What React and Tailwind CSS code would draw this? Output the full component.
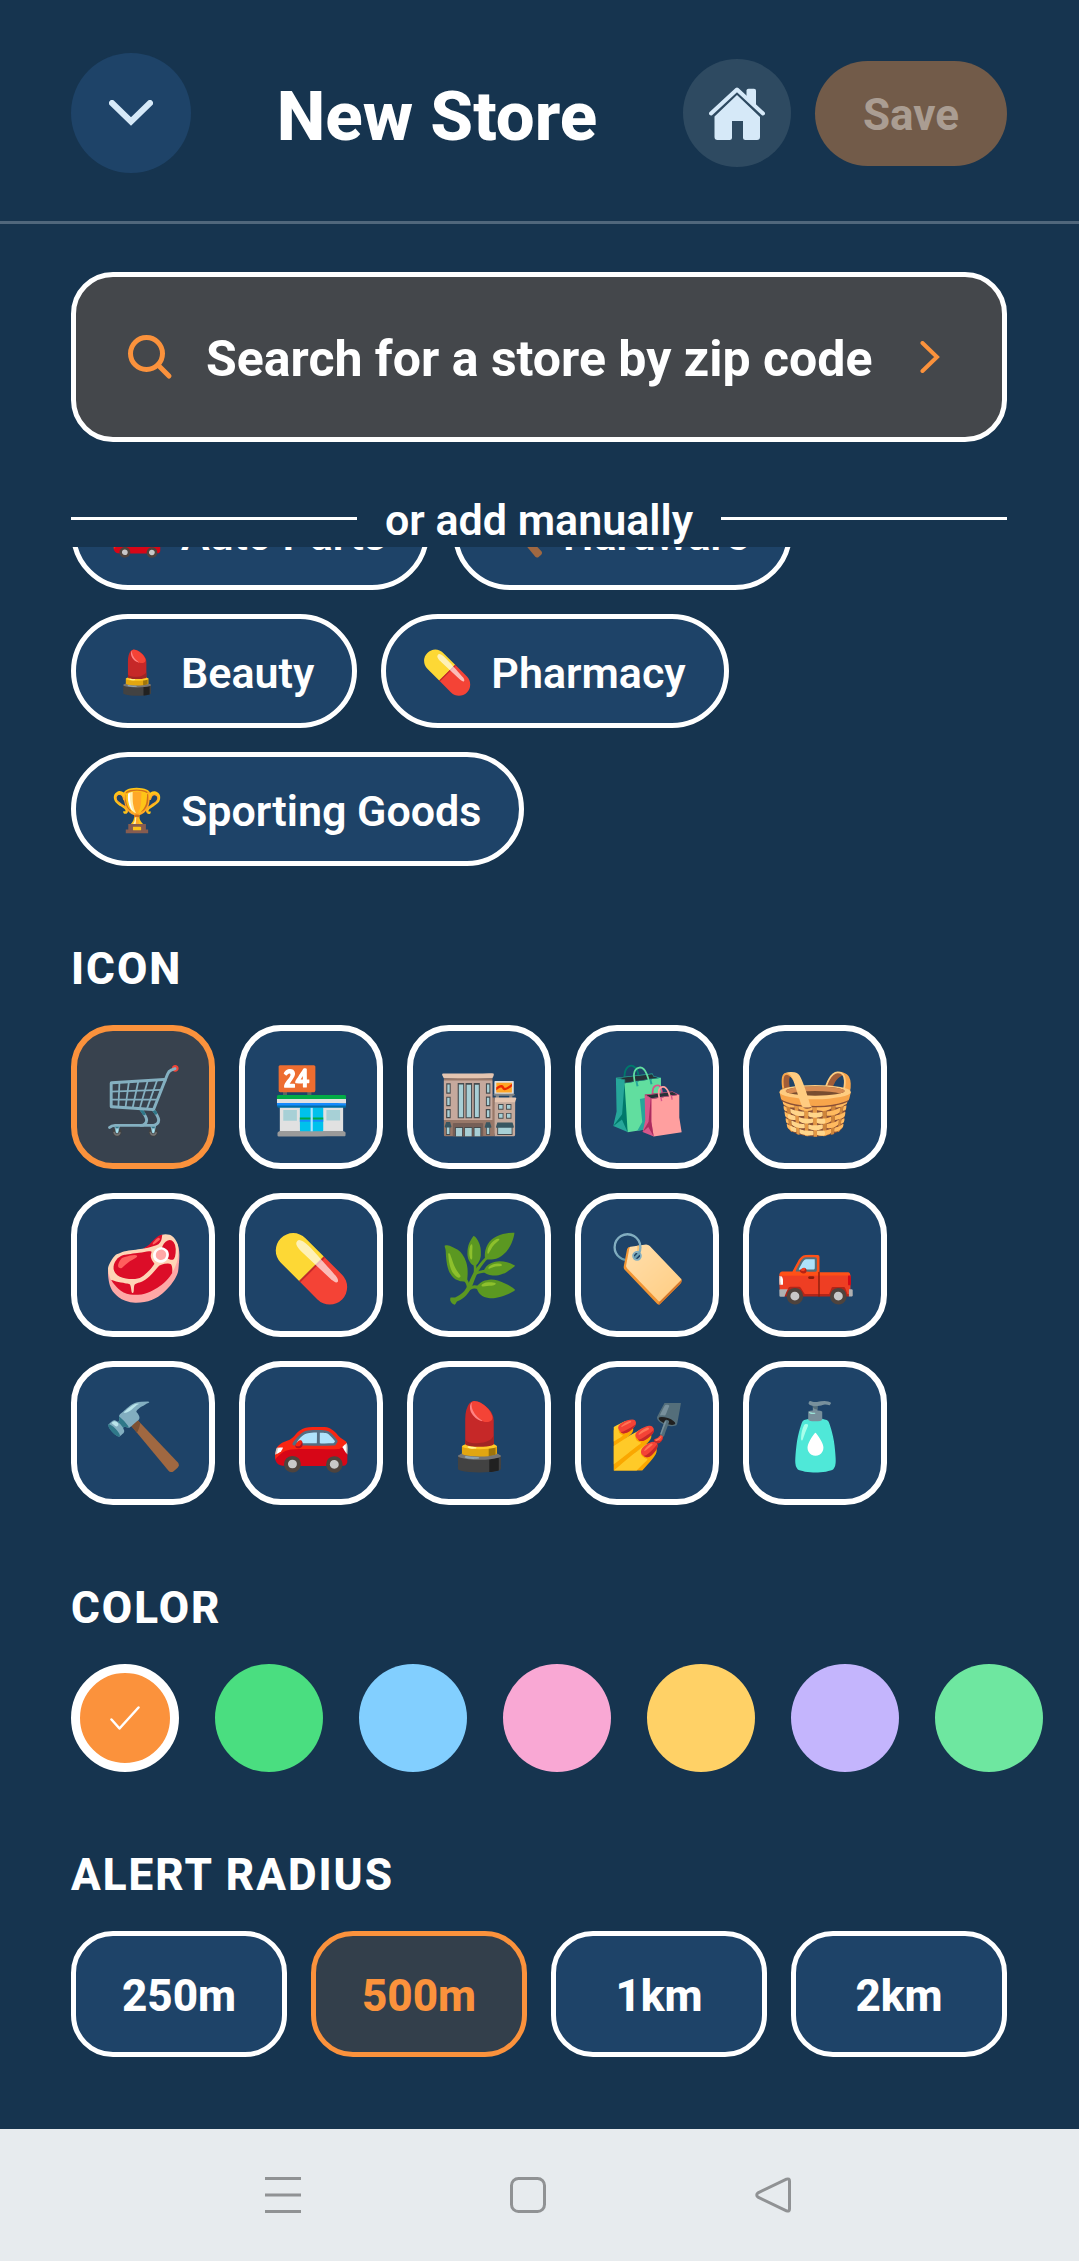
import { useState } from 'react'

const CATEGORIES = [
  { label: 'Auto Parts',     emoji: '🚗' },
  { label: 'Hardware',       emoji: '🔨' },
  { label: 'Beauty',         emoji: '💄' },
  { label: 'Pharmacy',       emoji: '💊' },
  { label: 'Sporting Goods', emoji: '🏆' },
]

const ICONS = [
  { emoji: '🛒', name: 'Cart' },
  { emoji: '🏪', name: 'Convenience store' },
  { emoji: '🏬', name: 'Department store' },
  { emoji: '🛍️', name: 'Shopping bags' },
  { emoji: '🧺', name: 'Basket' },
  { emoji: '🥩', name: 'Meat' },
  { emoji: '💊', name: 'Pill' },
  { emoji: '🌿', name: 'Herb' },
  { emoji: '🏷️', name: 'Tag' },
  { emoji: '🛻', name: 'Pickup truck' },
  { emoji: '🔨', name: 'Hammer' },
  { emoji: '🚗', name: 'Car' },
  { emoji: '💄', name: 'Lipstick' },
  { emoji: '💅', name: 'Nail polish' },
  { emoji: '🧴', name: 'Lotion' },
]

const COLORS = [
  { name: 'Orange', bg: 'bg-[#fb923c]' },
  { name: 'Green',  bg: 'bg-[#4ade80]' },
  { name: 'Blue',   bg: 'bg-[#82cfff]' },
  { name: 'Pink',   bg: 'bg-[#f9a8d4]' },
  { name: 'Yellow', bg: 'bg-[#ffd166]' },
  { name: 'Purple', bg: 'bg-[#c4b5fd]' },
  { name: 'Mint',   bg: 'bg-[#6ee7a0]' },
]

const RADII = ['250m', '500m', '1km', '2km']

export default function App() {
  const [icon, setIcon]         = useState('Cart')
  const [color, setColor]       = useState('Orange')
  const [radius, setRadius]     = useState('500m')
  const [category, setCategory] = useState('')

  return (
    <div className="min-h-screen flex flex-col bg-[#16344f] text-white font-['Roboto',sans-serif]">

      {/* Header */}
      <header className="flex items-center pt-[53px] pb-12 pl-[71px] pr-[72px] border-b-3 border-[#50677c]">
        <button
          type="button"
          aria-label="Close"
          className="size-[120px] rounded-full bg-[#1e4368] flex items-center justify-center shrink-0"
        >
          <ChevronDownIcon />
        </button>
        <h1 className="flex-1 pt-2 text-center text-[69px] leading-[80px] font-extrabold">New Store</h1>
        <div className="flex items-center gap-6 shrink-0">
          <button
            type="button"
            aria-label="Home"
            className="size-[108px] rounded-full bg-[#2e4a61] flex items-center justify-center"
          >
            <HomeIcon />
          </button>
          <button
            type="button"
            disabled
            className="px-12 pt-[26px] pb-[22px] rounded-full bg-[#725b49] text-[#aa9d92] text-[44px] leading-[57px] font-bold"
          >
            Save
          </button>
        </div>
      </header>

      <main className="flex-1 pt-12 pb-[72px]">

        {/* Zip search */}
        <div className="pl-[71px] pr-[72px]">
          <button
            type="button"
            className="w-full h-[170px] px-[50px] flex items-center rounded-[42px] border-5 border-white bg-[#44474b]"
          >
            <SearchIcon />
            <span className="flex-1 pt-1 pl-8 text-left text-[50px] leading-[60px] font-bold">
              Search for a store by zip code
            </span>
            <ChevronRightIcon />
          </button>

          <div className="flex items-center gap-7 pt-[47px]">
            <div className="flex-1 h-[3px] bg-white" />
            <span className="pt-1 text-[43px] leading-[54px] font-semibold">or add manually</span>
            <div className="flex-1 h-[3px] bg-white" />
          </div>
        </div>

        {/* Scrolled form */}
        <div className="overflow-hidden">
          <div className="-mt-[71px] pl-[71px] pr-[72px] flex flex-wrap gap-6">
            {CATEGORIES.map(({ label, emoji }) => (
              <button
                key={label}
                type="button"
                aria-pressed={category === label}
                onClick={() => setCategory(label)}
                className="h-[114px] pt-1 pl-[35px] pr-[38px] flex items-center gap-[18px] rounded-full border-5 border-white bg-[#1e4368]"
              >
                <span className="text-[42px] leading-[56px]">{emoji}</span>
                <span className="text-[43px] leading-[56px] font-semibold">{label}</span>
              </button>
            ))}
          </div>

          <SectionTitle>ICON</SectionTitle>
          <div className="pl-[71px] pr-[72px] flex flex-wrap gap-6">
            {ICONS.map(({ emoji, name }) => (
              <button
                key={name}
                type="button"
                aria-label={name}
                aria-pressed={icon === name}
                onClick={() => setIcon(name)}
                className={`size-36 pt-2 flex items-center justify-center rounded-[42px] border-6 text-[65px] leading-[80px]
                  ${icon === name ? 'border-[#fb923c] bg-[#38424e]' : 'border-white bg-[#1e4368]'}`}
              >
                {emoji}
              </button>
            ))}
          </div>

          <SectionTitle>COLOR</SectionTitle>
          <div className="pl-[71px] flex gap-9 overflow-hidden">
            {COLORS.map(({ name, bg }) => (
              <button
                key={name}
                type="button"
                aria-label={name}
                aria-pressed={color === name}
                onClick={() => setColor(name)}
                className={`size-[108px] shrink-0 rounded-full flex items-center justify-center
                  ${bg} ${color === name ? 'border-9 border-white' : ''}`}
              >
                {color === name && <CheckIcon />}
              </button>
            ))}
          </div>

          <SectionTitle>ALERT RADIUS</SectionTitle>
          <div className="pl-[71px] pr-[72px] grid grid-cols-4 gap-6">
            {RADII.map(r => (
              <button
                key={r}
                type="button"
                aria-pressed={radius === r}
                onClick={() => setRadius(r)}
                className={`h-[126px] pt-1 rounded-[42px] border-5 text-[44px] leading-[56px] font-extrabold
                  ${radius === r ? 'border-[#fb923c] bg-[#333f4b] text-[#fb923c]' : 'border-white bg-[#1e4368]'}`}
              >
                {r}
              </button>
            ))}
          </div>
        </div>
      </main>

      {/* System navigation */}
      <nav className="h-[132px] pl-[265px] pr-[288px] flex items-center justify-between bg-[#e7ebee] text-[#909294]">
        <button type="button" aria-label="Recent apps">
          <svg className="size-9" viewBox="0 0 36 36" fill="none" stroke="currentColor" strokeWidth="3">
            <path d="M0 1.5h36M0 18h36M0 34.5h36" />
          </svg>
        </button>
        <button type="button" aria-label="Home screen">
          <svg className="size-9" viewBox="0 0 36 36" fill="none" stroke="currentColor" strokeWidth="3">
            <rect x="1.5" y="1.5" width="33" height="33" rx="7" />
          </svg>
        </button>
        <button type="button" aria-label="Back">
          <svg className="size-9" viewBox="0 0 36 36" fill="none" stroke="currentColor" strokeWidth="3" strokeLinejoin="round">
            <path d="M31.5 2.2 L3 15.8 Q0.5 18 3 20.2 L31.5 33.8 Q34.5 34.8 34.5 32 V4 Q34.5 1.2 31.5 2.2 Z" />
          </svg>
        </button>
      </nav>
    </div>
  )
}

function SectionTitle({ children }) {
  return (
    <h2 className="pt-[73px] pb-[26px] pl-[71px] text-[44px] leading-[60px] font-extrabold tracking-[2px]">
      {children}
    </h2>
  )
}

function ChevronDownIcon() {
  return (
    <svg className="w-11 h-[26px]" viewBox="0 0 44 26" fill="none" stroke="#d6e9f8" strokeWidth="6" strokeLinecap="round">
      <path d="M3 3 L22 21.5 L41 3" />
    </svg>
  )
}

function ChevronRightIcon() {
  return (
    <svg className="w-5 h-8 mr-3" viewBox="0 0 20 32" fill="none" stroke="#fb923c" strokeWidth="4" strokeLinecap="round">
      <path d="M2.5 2 L17 16 L2.5 30" />
    </svg>
  )
}

function SearchIcon() {
  return (
    <svg className="size-12 shrink-0" viewBox="0 0 48 48" fill="none" stroke="#fb923c" strokeWidth="5" strokeLinecap="round">
      <circle cx="20.5" cy="20.5" r="16" />
      <path d="M32 32 L43 43" />
    </svg>
  )
}

function HomeIcon() {
  return (
    <svg className="w-14 h-[53px]" viewBox="0 0 56 53" fill="#d6e9f8">
      <path d="M37.5 3.5 Q37.5 1.8 39.5 1.8 H45 Q47 1.8 47 3.5 V19 L37.5 9.5 Z" />
      <path d="M2 26.5 L28 2.5 L54 26.5" fill="none" stroke="#d6e9f8" strokeWidth="4" strokeLinecap="round" strokeLinejoin="round" />
      <path d="M28 8 L51 30 V50 Q51 53 48 53 H36.5 Q34 53 34 50.5 V34 H23 V50.5 Q23 53 20.5 53 H8.5 Q5.5 53 5.5 50 V29.5 Z" />
    </svg>
  )
}

function CheckIcon() {
  return (
    <svg className="w-[30px] h-6" viewBox="0 0 30 24" fill="none" stroke="white" strokeWidth="2.5" strokeLinecap="round" strokeLinejoin="round">
      <path d="M1.5 13.5 L9.5 22.5 L28.5 1.5" />
    </svg>
  )
}
